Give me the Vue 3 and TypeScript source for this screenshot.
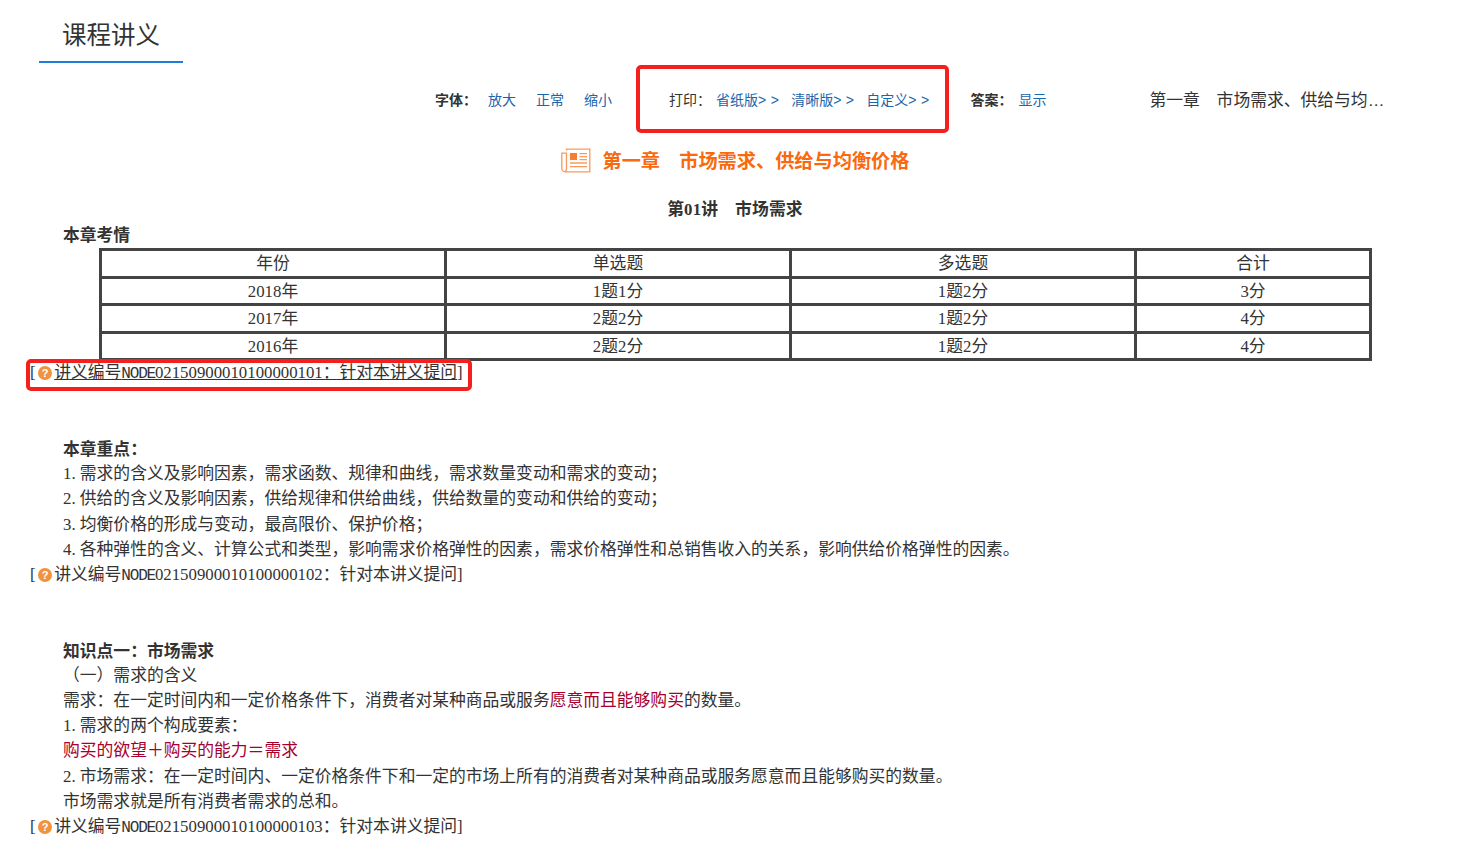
<script setup lang="ts">
interface Row { year: string; single: string; multi: string; total: string }
const rows: Row[] = [
  { year: '2018年', single: '1题1分', multi: '1题2分', total: '3分' },
  { year: '2017年', single: '2题2分', multi: '1题2分', total: '4分' },
  { year: '2016年', single: '2题2分', multi: '1题2分', total: '4分' },
]
</script>

<template>
  <div class="page">
    <div class="tabs"><div class="tab">课程讲义</div></div>

    <div class="toolbar">
      <b class="label">字体：</b>
      <a class="link zoom-link">放大</a>
      <a class="link zoom-link">正常</a>
      <a class="link zoom-link">缩小</a>
      <span class="print">
        <span class="print-label">打印：</span>
        <a class="link print-link">省纸版<i>&gt; &gt;</i></a>
        <a class="link print-link">清晰版<i>&gt; &gt;</i></a>
        <a class="link print-link">自定义<i>&gt; &gt;</i></a>
        <span class="mark mark-print"></span>
      </span>
      <b class="label answer">答案：</b>
      <a class="link">显示</a>
      <span class="chapter-short">第一章　市场需求、供给与均衡价格</span>
    </div>

    <h1 class="chapter">
      <svg class="news" width="30" height="25" viewBox="0 0 30 25" fill="none" stroke="#f79a5c" stroke-width="1.3">
        <path d="M5.5 2.5V1.2H28.8V23.8H4.2C2.2 23.8 .8 22.4 .8 20.6V5.2H5.5V20.6C5.5 22 4.9 23 4 23.8" />
        <rect x="9" y="5" width="7" height="7" fill="#f47f32" stroke="none" />
        <path d="M18.5 5.6H26M18.5 8.6H26M18.5 11.6H26M9 15H26M9 18.6H26" />
      </svg>
      <span>第一章　市场需求、供给与均衡价格</span>
    </h1>

    <article class="content">
      <p class="doc-title strong">第01讲　市场需求</p>
      <p class="para strong">本章考情</p>
      <table class="exam">
        <colgroup>
          <col class="c1" /><col class="c1" /><col class="c1" /><col class="c4" />
        </colgroup>
        <tbody>
          <tr><td>年份</td><td>单选题</td><td>多选题</td><td>合计</td></tr>
          <tr v-for="r in rows" :key="r.year">
            <td>{{ r.year }}</td><td>{{ r.single }}</td><td>{{ r.multi }}</td><td>{{ r.total }}</td>
          </tr>
        </tbody>
      </table>

      <div class="note">
        [<span class="qmark">?</span><span class="under">讲义编号<span class="nd">NODE</span>02150900010100000101：针对本讲义提问</span>]
        <span class="mark mark-note"></span>
      </div>

      <div class="spacer"></div>
      <p class="para strong">本章重点：</p>
      <p class="para">1. 需求的含义及影响因素，需求函数、规律和曲线，需求数量变动和需求的变动；</p>
      <p class="para">2. 供给的含义及影响因素，供给规律和供给曲线，供给数量的变动和供给的变动；</p>
      <p class="para">3. 均衡价格的形成与变动，最高限价、保护价格；</p>
      <p class="para">4. 各种弹性的含义、计算公式和类型，影响需求价格弹性的因素，需求价格弹性和总销售收入的关系，影响供给价格弹性的因素。</p>
      <div class="note">[<span class="qmark">?</span>讲义编号<span class="nd">NODE</span>02150900010100000102：针对本讲义提问]</div>

      <div class="spacer"></div>
      <p class="para strong">知识点一：市场需求</p>
      <p class="para">（一）需求的含义</p>
      <p class="para">需求：在一定时间内和一定价格条件下，消费者对某种商品或服务<span class="red">愿意而且能够购买</span>的数量。</p>
      <p class="para">1. 需求的两个构成要素：</p>
      <p class="para red">购买的欲望＋购买的能力＝需求</p>
      <p class="para">2. 市场需求：在一定时间内、一定价格条件下和一定的市场上所有的消费者对某种商品或服务愿意而且能够购买的数量。</p>
      <p class="para">市场需求就是所有消费者需求的总和。</p>
      <div class="note">[<span class="qmark">?</span>讲义编号<span class="nd">NODE</span>02150900010100000103：针对本讲义提问]</div>
    </article>
  </div>
</template>

<style>
html, body { margin: 0; background: #fff; }
</style>

<style scoped>
.page {
  width: 1470px;
  height: 857px;
  overflow: hidden;
  color: #333;
  font-family: "Liberation Sans", "Noto Sans CJK SC", sans-serif;
}
.tabs { padding-left: 39px; }
.tab {
  width: 144px;
  height: 61px;
  line-height: 71px;
  text-align: center;
  font-size: 24.5px;
  border-bottom: 2px solid #1e7ddb;
}
.toolbar {
  position: relative;
  display: flex;
  align-items: center;
  box-sizing: border-box;
  height: 74px;
  padding: 0 0 2px 435px;
  font-size: 14px;
  white-space: nowrap;
}
.label { font-weight: 700; margin-right: 11px; }
.link { color: #1a65ab; }
.zoom-link { margin-right: 20px; }
.print { display: flex; margin-left: 37px; }
.print-label { margin-right: 5px; }
.print-link { margin-right: 12px; }
.print-link i { font-style: normal; letter-spacing: .3px; }
.answer { margin-left: 29px; margin-right: 6px; }
.chapter-short {
  margin-left: 103px;
  width: 240px;
  overflow: hidden;
  text-overflow: ellipsis;
  font-size: 16.8px;
}
.mark {
  position: absolute;
  box-sizing: border-box;
  border: 4px solid #f5201d;
  border-radius: 5px;
}
.mark-print { left: 636px; top: 2px; width: 313px; height: 68px; }
.chapter {
  display: flex;
  align-items: center;
  justify-content: center;
  gap: 12px;
  box-sizing: border-box;
  height: 48px;
  margin: 0;
  padding-bottom: 2px;
  font-size: 19.2px;
  font-weight: 700;
  color: #f96a0e;
}
.content {
  padding: 11px 0 0 30px;
  font-family: "Liberation Serif", "Noto Sans CJK SC", serif;
  font-size: 16.8px;
  line-height: 25.2px;
  white-space: nowrap;
}
p { margin: 0; }
.para { padding-left: 33px; }
.strong { font-weight: 700; padding-top: 1px; margin-bottom: -1px; }
.doc-title { text-align: center; padding-right: 30px; letter-spacing: .15px; margin-bottom: 0; }
.red { color: #a8002e; }
.exam {
  margin: 1px 0 -1px 69px;
  width: 1270px;
  table-layout: fixed;
  border-collapse: collapse;
  border: 3px solid #444;
}
.c1 { width: 345px; }
.c4 { width: 235px; }
.exam td {
  height: 27.5px;
  padding: 1px 0 0;
  box-sizing: border-box;
  line-height: 22px;
  text-align: center;
  border: 3px solid #444;
}
.note { position: relative; height: 25.2px; }
.nd { font-family: "Liberation Mono", monospace; font-size: 16px; letter-spacing: -1.2px; }
.under { text-decoration: underline; }
.qmark {
  display: inline-block;
  width: 14px;
  height: 14px;
  margin: 0 2px 0 2.6px;
  border-radius: 50%;
  background: #f0933c;
  color: #fff;
  font: 700 11px/14px "Liberation Sans", sans-serif;
  text-align: center;
  vertical-align: 1px;
}
.mark-note { left: -4px; top: -1px; width: 446px; height: 32px; }
.spacer { height: 50.4px; }
</style>
